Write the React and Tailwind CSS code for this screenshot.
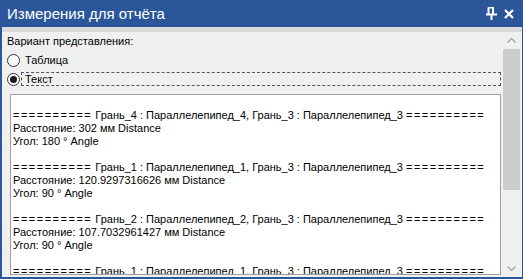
import React from "react";

const EQ = "==========";

function Header({ a, b }) {
  return (
    <>
      <span className="tracking-[1.5px]">{EQ}</span>
      {` Грань_${a} : Параллелепипед_${a}, Грань_${b} : Параллелепипед_${b} `}
      <span className="tracking-[1.5px]">{EQ}</span>
    </>
  );
}

const lines = [
  "",
  <Header a="4" b="3" />,
  "Расстояние: 302 мм Distance",
  "Угол: 180 ° Angle",
  "",
  <Header a="1" b="3" />,
  "Расстояние: 120.9297316626 мм Distance",
  "Угол: 90 ° Angle",
  "",
  <Header a="2" b="3" />,
  "Расстояние: 107.7032961427 мм Distance",
  "Угол: 90 ° Angle",
  "",
  <Header a="1" b="3" />,
  "Расстояние: 120.9297316626 мм Distance",
];

function Radio({ checked }) {
  return (
    <span className="relative flex h-[13px] w-[13px] shrink-0 items-center justify-center rounded-full border border-[#333333] bg-white">
      {checked && <span className="h-[7px] w-[7px] rounded-full bg-[#1a1a1a]" />}
    </span>
  );
}

export default function App() {
  return (
    <div
      className="flex h-[279px] w-[523px] flex-col bg-[#2b579a] text-black"
      style={{ fontFamily: '"Liberation Sans", Arial, sans-serif' }}
    >
      <div className="flex h-[27px] shrink-0 items-center pl-[7px] pr-[9px] text-white">
        <span className="text-[15px] leading-[20px]">Измерения для отчёта</span>
        <div className="ml-auto flex items-center gap-[7px]">
          <svg width="11" height="13" viewBox="0 0 11 13" className="block">
            <path d="M2.5 0.5 V7 M2.5 0.5 H7 V7 M0 7.5 H11 M5.5 7.5 V13" stroke="white" strokeWidth="2" fill="none" />
          </svg>
          <svg width="10" height="10" viewBox="0 0 10 10" className="block">
            <path d="M1 1 L9 9 M9 1 L1 9" stroke="white" strokeWidth="2.2" fill="none" />
          </svg>
        </div>
      </div>
      <div className="ml-[2px] mr-[1px] mb-[2px] flex flex-1 flex-col bg-[#f0f0f0]">
        <div className="h-[5px] shrink-0 bg-[#dadada]" />
        <div className="flex flex-1">
          <div className="flex flex-1 flex-col pl-[5px] pr-[2px] text-[11px]">
            <div className="mt-[2px] h-[14px] leading-[14px]">Вариант представления:</div>
            <div className="mt-[5px] flex h-[14px] items-center">
              <Radio />
              <span className="ml-[5px] leading-[14px]">Таблица</span>
            </div>
            <div className="mt-[5px] flex h-[14px] items-center">
              <Radio checked />
              <span className="ml-[1px] flex h-[14px] flex-1 items-center border border-dashed border-[#555555] pl-[3px] leading-[12px]">
                Текст
              </span>
            </div>
            <div className="mt-[8px] ml-[3px] h-[181px] overflow-hidden border border-[#a0a0a0] bg-white pl-[2px] pt-[1px]">
              {lines.map((l, i) => (
                <div key={i} className="h-[13px] whitespace-pre leading-[13px]">
                  {l}
                </div>
              ))}
            </div>
          </div>
          <div className="flex w-[17px] shrink-0 flex-col bg-[#f0f0f0]">
            <div className="flex h-[17px] items-center justify-center">
              <svg width="9" height="5" viewBox="0 0 9 5">
                <path d="M0.5 4.5 L4.5 0.5 L8.5 4.5" stroke="#a3a3a3" strokeWidth="1.3" fill="none" />
              </svg>
            </div>
            <div className="h-[141px] bg-[#cdcdcd]" />
            <div className="flex-1" />
            <div className="flex h-[17px] items-center justify-center">
              <svg width="9" height="5" viewBox="0 0 9 5">
                <path d="M0.5 0.5 L4.5 4.5 L8.5 0.5" stroke="#a3a3a3" strokeWidth="1.3" fill="none" />
              </svg>
            </div>
          </div>
          <div className="w-[2px] shrink-0" />
        </div>
      </div>
    </div>
  );
}
